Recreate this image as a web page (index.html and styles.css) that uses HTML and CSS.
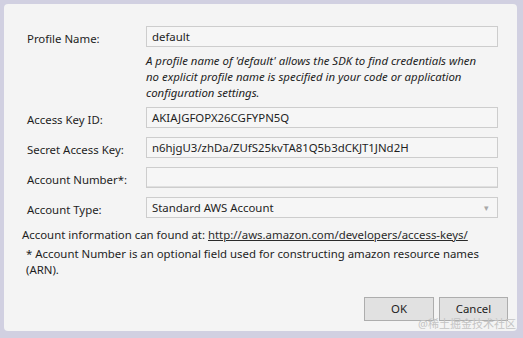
FILE: index.html
```html
<!DOCTYPE html>
<html>
<head>
<meta charset="utf-8">
<link rel="stylesheet" href="styles.css">
</head>
<body>
<div class="frame">
  <div class="panel">
    <div class="form">
      <div class="label">Profile Name:</div>
      <div class="field">default</div>
      <div class="hint">A profile name of 'default' allows the SDK to find credentials when no explicit profile name is specified in your code or application configuration settings.</div>
      <div class="label">Access Key ID:</div>
      <div class="field">AKIAJGFOPX26CGFYPN5Q</div>
      <div class="label">Secret Access Key:</div>
      <div class="field">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</div>
      <div class="label">Account Number*:</div>
      <div class="field empty"></div>
      <div class="label">Account Type:</div>
      <div class="field select"><span>Standard AWS Account</span><span class="arrow">&#9662;</span></div>
    </div>
    <div class="info">Account information can found at: <span class="link">http://aws.amazon.com/developers/access-keys/</span></div>
    <div class="note">* Account Number is an optional field used for constructing amazon resource names (ARN).</div>
    <div class="buttons">
      <div class="btn ok">OK</div>
      <div class="btn cancel">Cancel</div>
    </div>
    <div class="watermark">@稀土掘金技术社区</div>
  </div>
</div>
</body>
</html>
```

FILE: styles.css
```css
html, body {
  margin: 0;
  padding: 0;
}
body {
  width: 523px;
  height: 338px;
  background: #d1d0e1;
  font-family: "Noto Sans", "Noto Sans CJK SC", sans-serif;
  font-size: 11.4px;
  color: #1e1e1e;
  overflow: hidden;
}
.frame {
  padding: 4px 6px 6px 4px;
}
.panel {
  position: relative;
  height: 327px;
  box-sizing: border-box;
  background: #f4f4f4;
  border-radius: 4px;
  padding: 22px 0 0 0;
}
.form {
  display: grid;
  grid-template-columns: 119px 352px;
  column-gap: 0;
  row-gap: 9px;
  padding-left: 23px;
  align-items: center;
}
.label {
  line-height: 21px;
  margin-top: 2px;
  margin-bottom: -2px;
}
.field {
  height: 21px;
  box-sizing: border-box;
  border: 1px solid #cdcdcd;
  background: #f6f6f6;
  padding: 0 5px;
  line-height: 19px;
  white-space: nowrap;
}
.field.empty {
  box-shadow: inset 0 -3px 0 -2px #e0e0e0;
}
.select {
  display: flex;
  justify-content: space-between;
  align-items: center;
}
.arrow {
  color: #a8a8a8;
  font-size: 9px;
  padding-right: 3px;
}
.hint {
  grid-column: 2;
  font-style: italic;
  font-size: 11.4px;
  line-height: 16px;
  margin: -3px 0 -3px 0;
  padding-right: 10px;
}
.info {
  margin-top: 9px;
  padding-left: 18px;
  line-height: 16px;
}
.link {
  text-decoration: underline;
  color: #2b2b2b;
}
.note {
  margin-top: 3px;
  padding-left: 22px;
  padding-right: 30px;
  line-height: 16px;
}
.buttons {
  display: flex;
  justify-content: flex-end;
  gap: 5px;
  margin-top: 19px;
  padding-right: 9px;
}
.btn {
  height: 24px;
  box-sizing: border-box;
  border: 1px solid #adadad;
  background: #e1e1e1;
  text-align: center;
  line-height: 22px;
}
.ok { width: 70px; }
.cancel { width: 69px; }
.watermark {
  position: absolute;
  right: 1px;
  bottom: 0;
  font-size: 11px;
  color: #c4c4c4;
  line-height: 14px;
}
```
